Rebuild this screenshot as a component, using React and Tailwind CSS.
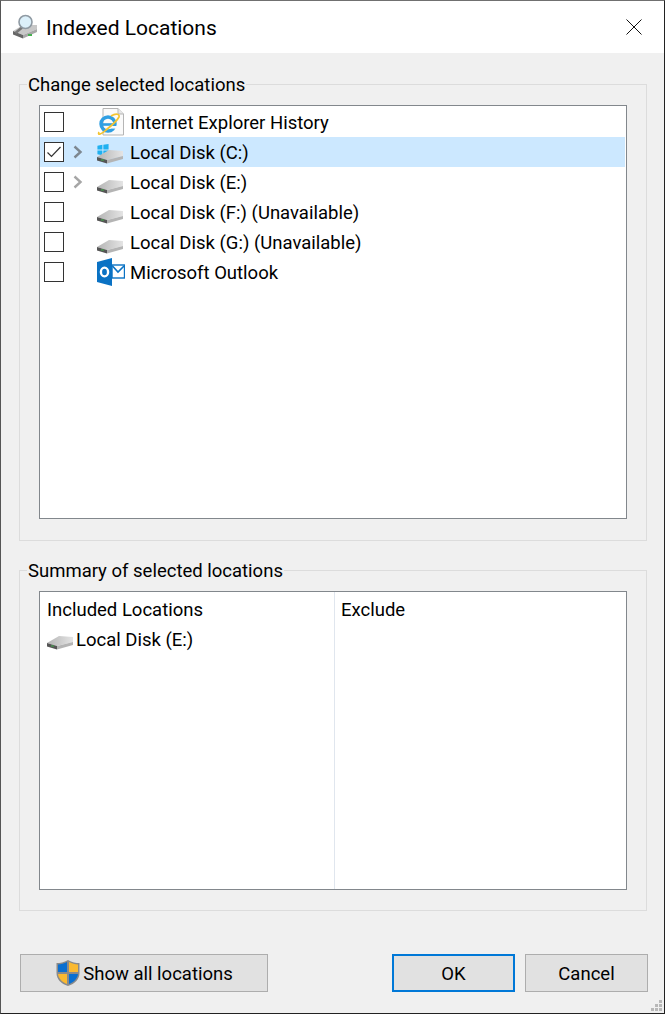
const font = { fontFamily: 'Roboto, sans-serif' };

function DriveIcon({ className = '' }) {
  return (
    <svg width="28" height="16" viewBox="1 0 28 16" className={className}>
      <defs>
        <linearGradient id="driveTop" x1="0" y1="0" x2="1" y2="0">
          <stop offset="0" stopColor="#b4b4b4" />
          <stop offset="1" stopColor="#e4e4e4" />
        </linearGradient>
      </defs>
      <path d="M1 9 L13 2 L27 3 L27 8 L11 12 Z" fill="url(#driveTop)" />
      <path d="M1 9 L11 12 L11 15.5 L1 12.5 Z" fill="#555555" />
      <path d="M11 12 L27 8 L27 11 L11 15.5 Z" fill="#b4b4b4" />
      <path d="M5 12 h3" stroke="#45b04f" strokeWidth="1" />
    </svg>
  );
}

function WinDriveIcon() {
  return (
    <div className="relative h-[24px] w-[28px]">
      <svg width="12" height="12" viewBox="0 0 14 14" className="absolute left-[0px] top-[4px]">
        <path d="M0.5 2 L6.3 1 V6.5 H0.5 Z M7.4 0.8 L13.5 0 V6.5 H7.4 Z M0.5 7.6 H6.3 V13 L0.5 12 Z M7.4 7.6 H13.5 V14 L7.4 13.2 Z" fill="#1fb0f0" />
      </svg>
      <DriveIcon className="absolute left-0 top-[8px]" />
    </div>
  );
}

function IeIcon() {
  return (
    <svg width="28" height="28" viewBox="0 0 28 28">
      <path d="M6 0.5 H21 L26.5 6 V27 H6 Z" fill="#fafafa" stroke="#b5b5b5" />
      <path d="M21 0.5 V6 H26.5" fill="#e8e8e8" stroke="#b5b5b5" />
      <circle cx="11" cy="16" r="7" fill="none" stroke="#2f9fe3" strokeWidth="3.4" />
      <path d="M4 16.5 H18" stroke="#2f9fe3" strokeWidth="2.6" />
      <rect x="13" y="18" width="8" height="2.6" fill="#fafafa" />
      <path d="M2 24 C0 28 5 26 9 22 C14 18 20 13 22 9 C23 6 19 5 14 8" fill="none" stroke="#f4c430" strokeWidth="1.7" />
    </svg>
  );
}

function OutlookIcon() {
  return (
    <svg width="28" height="28" viewBox="0 0 28 28">
      <rect x="15" y="7" width="12.5" height="13" fill="#fff" stroke="#0a72c4" strokeWidth="1.4" />
      <path d="M15.5 8 L21 14 L27 8" fill="none" stroke="#0a72c4" strokeWidth="1.6" />
      <path d="M0 4 L15 0 V28 L0 24 Z" fill="#0a72c4" />
      <ellipse cx="7.5" cy="14" rx="3.6" ry="4.4" fill="none" stroke="#fff" strokeWidth="2.4" />
    </svg>
  );
}

function ShieldIcon() {
  return (
    <svg width="26" height="28" viewBox="0 0 26 28">
      <path d="M13 1 C9 3.5 5 4 1.5 4 V14 C1.5 20 6 25 13 27 C20 25 24.5 20 24.5 14 V4 C21 4 17 3.5 13 1 Z" fill="#8a8a8a" />
      <path d="M12 3 C9 4.8 6 5.3 3 5.4 V13 H12 Z" fill="#0a6fd0" />
      <path d="M14 3 C17 4.8 20 5.3 23 5.4 V13 H14 Z" fill="#fbb92f" />
      <path d="M3 15 C3.5 19.5 7 23 12 25 V15 Z" fill="#fbb92f" />
      <path d="M14 15 V25 C19 23 22.5 19.5 23 15 Z" fill="#0a6fd0" />
    </svg>
  );
}

function TitleIcon() {
  return (
    <svg width="28" height="26" viewBox="0 0 28 26">
      <path d="M1 17 L11 11 L25 11 L25 15 L11 21 Z" fill="#c8c8c8" />
      <path d="M1 17 L11 21 L11 24.5 L1 20.5 Z" fill="#666666" />
      <path d="M11 21 L25 15 L25 18 L11 24.5 Z" fill="#a8a8a8" />
      <path d="M3.5 19 L10 13.5" stroke="#777" strokeWidth="2.6" />
      <circle cx="13.5" cy="8" r="6.5" fill="#dcf0fa" stroke="#8f9aa3" strokeWidth="1.6" />
      <path d="M16 21 h4" stroke="#45b04f" strokeWidth="2" />
    </svg>
  );
}

function Checkbox({ checked }) {
  return (
    <div className="flex h-[20px] w-[20px] items-center justify-center border border-[#333333] bg-white">
      {checked && (
        <svg width="16" height="14" viewBox="0 0 16 14">
          <path d="M1.5 7.5 L5.5 11.5 L14.5 2" fill="none" stroke="#333333" strokeWidth="1.2" />
        </svg>
      )}
    </div>
  );
}

function Chevron({ dark }) {
  return (
    <svg width="10" height="14" viewBox="0 0 10 14">
      <path d="M1.5 1.5 L7.5 7 L1.5 12.5" fill="none" stroke={dark ? '#7d8790' : '#a6a6a6'} strokeWidth="2.4" />
    </svg>
  );
}

const rows = [
  { label: 'Internet Explorer History', icon: <IeIcon /> },
  { label: 'Local Disk (C:)', icon: <WinDriveIcon />, checked: true, selected: true, expand: true },
  { label: 'Local Disk (E:)', icon: <DriveIcon className="mt-[8px]" />, expand: true },
  { label: 'Local Disk (F:) (Unavailable)', icon: <DriveIcon className="mt-[8px]" /> },
  { label: 'Local Disk (G:) (Unavailable)', icon: <DriveIcon className="mt-[8px]" /> },
  { label: 'Microsoft Outlook', icon: <OutlookIcon /> },
];

function TreeRow({ row }) {
  return (
    <div className={`flex h-[30px] items-center ${row.selected ? 'bg-[#cce8ff]' : ''}`}>
      <div className="ml-[4px]">
        <Checkbox checked={row.checked} />
      </div>
      <div className="ml-[9px] flex w-[10px] justify-center">
        {row.expand && <Chevron dark={row.selected} />}
      </div>
      <div className="ml-[14px] flex w-[28px] justify-center">{row.icon}</div>
      <span className="ml-[5px] whitespace-nowrap pt-[3px]">{row.label}</span>
    </div>
  );
}

function Group({ title, children, className }) {
  return (
    <fieldset className={`border border-[#dcdcdc] ${className}`}>
      <legend className="ml-[7px] h-[24px] px-[1px] leading-[26px]">{title}</legend>
      {children}
    </fieldset>
  );
}

function Button({ children, className = '' }) {
  return (
    <button className={`flex h-[38px] items-center justify-center bg-[#e1e1e1] ${className}`}>
      {children}
    </button>
  );
}

export default function App() {
  return (
    <div
      style={font}
      className="relative flex h-[1014px] w-[665px] flex-col border border-b-[#222222] border-l-[#555555] border-r-[#222222] border-t-[#707070] bg-[#f0f0f0] text-[18.5px] text-black"
    >
      <div className="flex h-[52px] items-center bg-white pl-[11px] pr-[21px]">
        <TitleIcon />
        <span className="ml-[6px] pt-[4px] text-[21px]">Indexed Locations</span>
        <svg width="18" height="18" viewBox="0 0 18 18" className="ml-auto">
          <path d="M1.5 1.5 L16.5 16.5 M16.5 1.5 L1.5 16.5" stroke="#111111" strokeWidth="1" />
        </svg>
      </div>

      <div className="flex flex-1 flex-col pl-[18px] pr-[17px] pt-[19px]">
        <Group title="Change selected locations" className="h-[469px]">
          <div className="mx-[19px] mt-[9px] h-[414px] border border-[#82878c] bg-white pr-[1px] pt-[1px]">
            {rows.map((row) => (
              <TreeRow key={row.label} row={row} />
            ))}
          </div>
        </Group>

        <Group title="Summary of selected locations" className="mt-[17px] h-[353px]">
          <div className="mx-[19px] mt-[9px] flex h-[299px] border border-[#82878c] bg-white">
            <div className="w-[295px] border-r border-[#e0e6ee] pl-[7px] pt-[3px]">
              <div className="h-[29px] leading-[30px]">Included Locations</div>
              <div className="flex h-[30px] items-center">
                <DriveIcon className="mt-[6px]" />
                <span className="ml-[1px] pt-[4px]">Local Disk (E:)</span>
              </div>
            </div>
            <div className="flex-1 pl-[6px] pt-[3px]">
              <div className="h-[29px] leading-[30px]">Exclude</div>
            </div>
          </div>
        </Group>

        <div className="mr-[-1px] mt-[43px] flex items-center">
          <Button className="ml-[1px] w-[248px] border border-[#adadad]">
            <ShieldIcon />
            <span className="ml-[2px] pt-[3px]">Show all locations</span>
          </Button>
          <Button className="ml-auto w-[123px] border-2 border-[#0078d7]">
            <span className="pt-[3px]">OK</span>
          </Button>
          <Button className="ml-[10px] w-[123px] border border-[#adadad]">
            <span className="pt-[3px]">Cancel</span>
          </Button>
        </div>
      </div>

      {/* size grip */}
      <svg width="12" height="12" viewBox="0 0 12 12" className="absolute bottom-[1px] right-[1px]">
        <path d="M8 0h3v3H8z M4 4h3v3H4z M8 4h3v3H8z M0 8h3v3H0z M4 8h3v3H4z M8 8h3v3H8z" fill="#b8b8b8" />
      </svg>
    </div>
  );
}
